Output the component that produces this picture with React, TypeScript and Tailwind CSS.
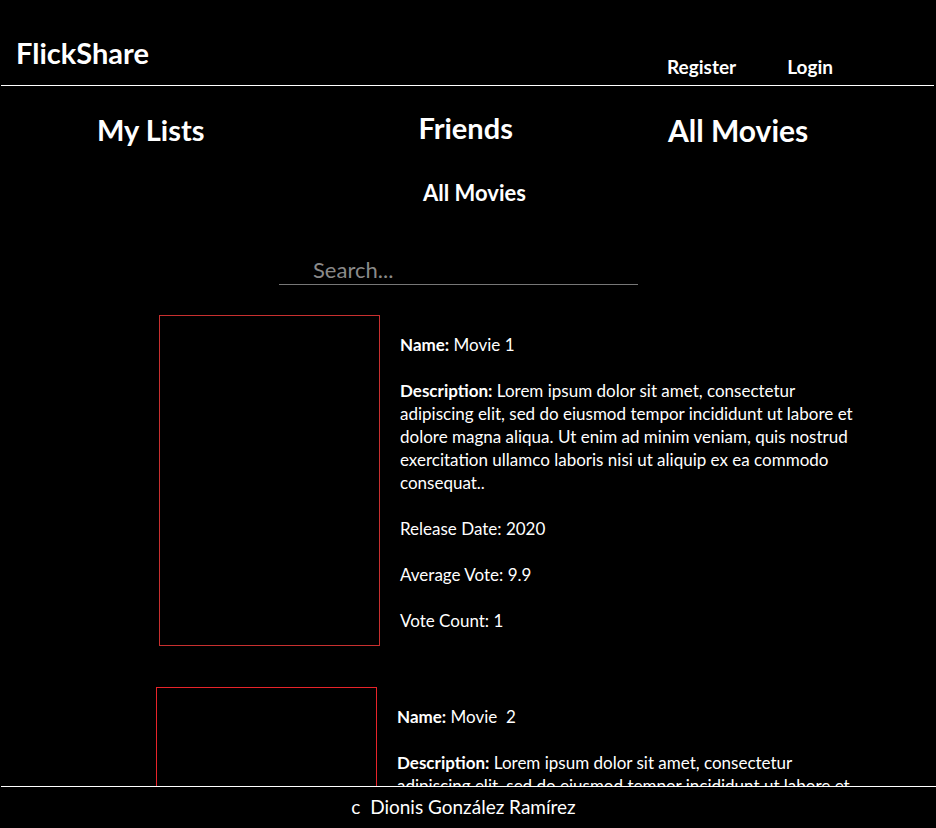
const lorem =
  'Lorem ipsum dolor sit amet, consectetur adipiscing elit, sed do eiusmod tempor incididunt ut labore et dolore magna aliqua. Ut enim ad minim veniam, quis nostrud exercitation ullamco laboris nisi ut aliquip ex ea commodo consequat..'

const movies = [
  { id: 1, name: 'Movie 1', release: 2020, vote: 9.9, count: 1, border: 'border-[#c8302f]', offset: 'ml-[159px]' },
  { id: 2, name: 'Movie\u00a0 2', release: 2020, vote: 9.9, count: 1, border: 'border-[#e8242a]', offset: 'ml-[156px]' },
]

export default function App() {
  return (
    <div className="min-h-[828px] bg-black text-white font-['Lato',sans-serif] pb-12">
      {/* Header */}
      <header className="mx-[1px] mr-[2px] border-b border-white h-[86px] flex items-start">
        <h1 className="text-[29px] font-bold ml-[15px] mt-[38px] leading-none">FlickShare</h1>
        <nav className="ml-auto mr-[101px] mt-[57px] flex gap-[51px] text-[19px] font-bold leading-none">
          <a>Register</a>
          <a>Login</a>
        </nav>
      </header>

      {/* Sections */}
      <div className="flex items-start text-[29px] font-bold leading-none">
        <div className="ml-[97px] mt-[29px]">My Lists</div>
        <div className="ml-[214px] mt-[27px]">Friends</div>
        <div className="ml-[155px] mt-[29px] text-[30px]">All Movies</div>
      </div>

      <h2 className="text-center text-[22px] font-bold mt-[37px] ml-[13px] leading-none">All Movies</h2>

      <div className="ml-[279px] mt-[53px] w-[359px] border-b border-[#777]">
        <input
          placeholder="Search..."
          className="w-full bg-transparent pl-[34px] pb-[1px] text-[22px] leading-[26px] text-white placeholder:text-[#8a8a8a] outline-none"
        />
      </div>

      {/* Movie list */}
      <div className="mt-[30px] flex flex-col gap-[41px]">
        {movies.map((m) => (
          <div key={m.id} className={`flex items-start ${m.offset}`}>
            <div className={`w-[221px] h-[331px] shrink-0 border ${m.border}`} />
            <div className="ml-[20px] w-[470px] pt-[18px] text-[17px] leading-[23px] space-y-[23px]">
              <p>
                <b>Name:</b> {m.name}
              </p>
              <p>
                <b>Description:</b> {lorem}
              </p>
              <p>Release Date: {m.release}</p>
              <p>Average Vote: {m.vote}</p>
              <p>Vote Count: {m.count}</p>
            </div>
          </div>
        ))}
      </div>

      {/* Footer */}
      <footer className="fixed bottom-0 left-0 right-0 h-[42px] bg-black border-t border-white ml-[1px] flex items-center justify-center">
        <span className="text-[19px] mr-[10px] pb-[1px]">c&nbsp; Dionis González Ramírez</span>
      </footer>
    </div>
  )
}
